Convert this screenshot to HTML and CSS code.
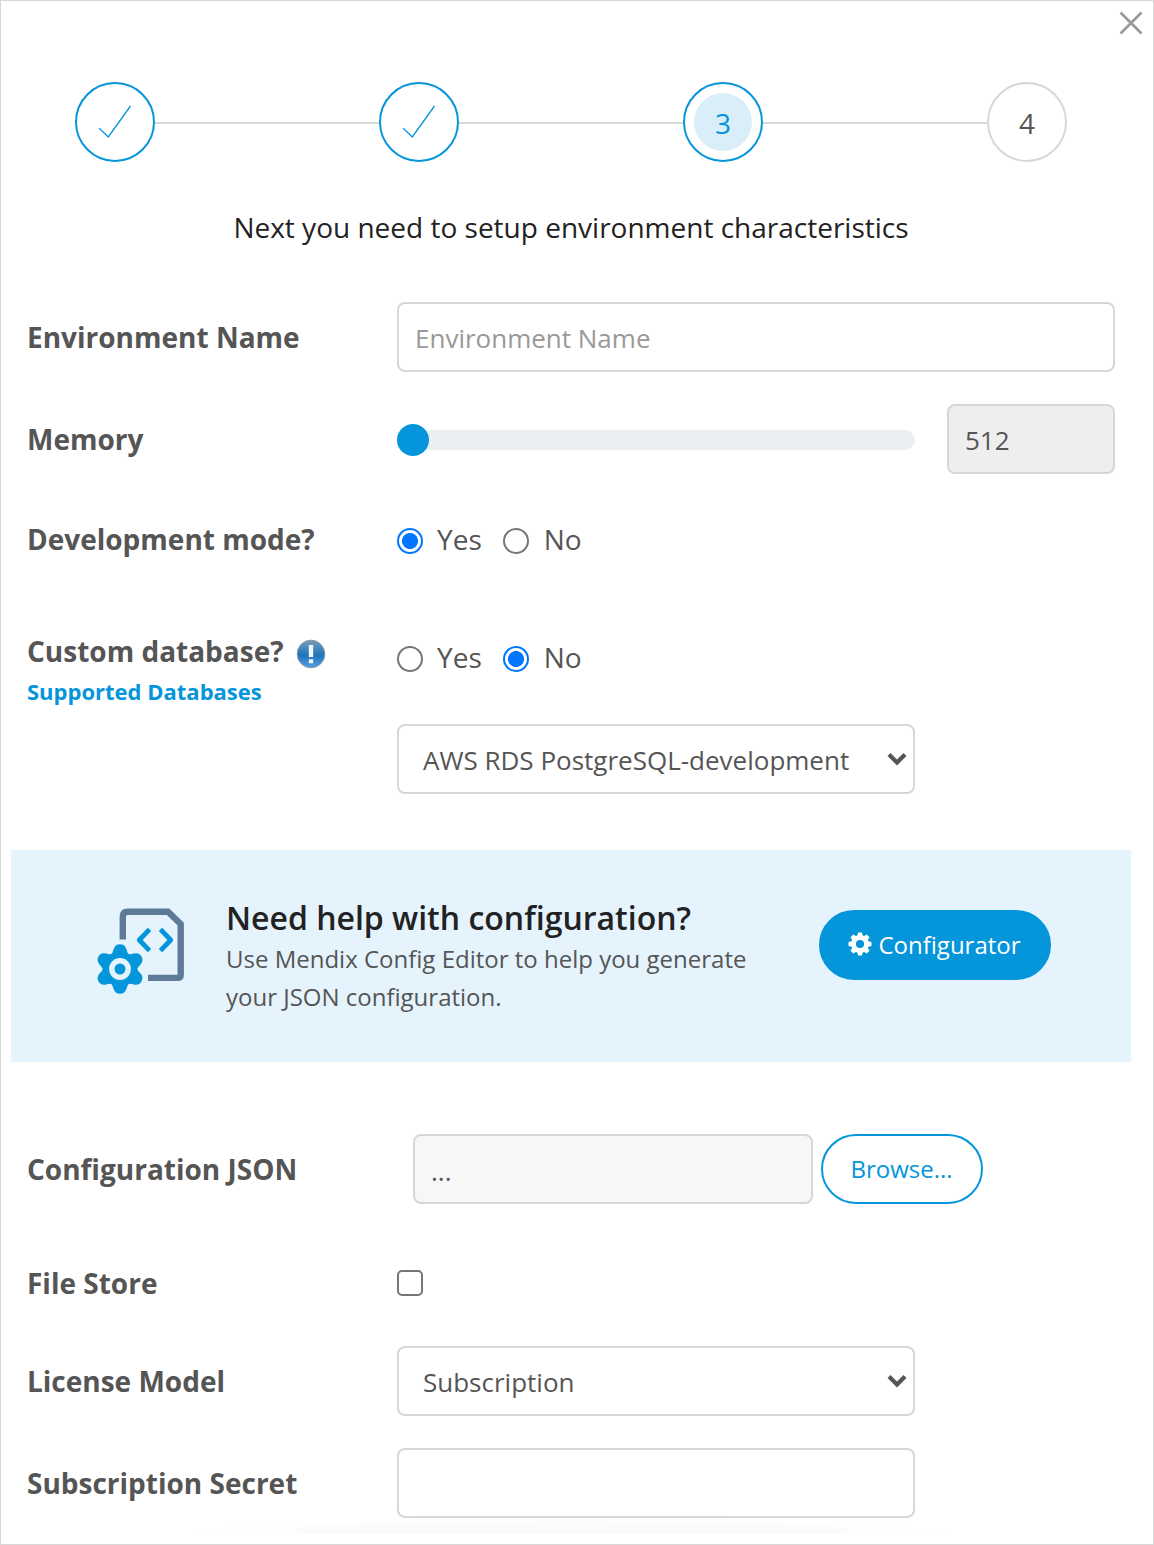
FILE: index.html
```html
<!DOCTYPE html>
<html lang="en">
<head>
<meta charset="utf-8">
<title>Create Environment</title>
<link rel="stylesheet" href="styles.css">
</head>
<body>
<main class="dialog">
  <button class="close" aria-label="Close">
    <svg width="24" height="24" viewBox="0 0 24 24"><path d="M1.5 1.5 22.5 22.5M22.5 1.5 1.5 22.5" fill="none" stroke="#999" stroke-width="2.7"/></svg>
  </button>
  <div class="steps">
    <div class="step done"><svg width="34" height="34" viewBox="0 0 34 34"><path d="M1.2 24.3 10.3 33 32.5 2" fill="none" stroke="#0595db" stroke-width="1.3"/></svg></div>
    <div class="line"></div>
    <div class="step done"><svg width="34" height="34" viewBox="0 0 34 34"><path d="M1.2 24.3 10.3 33 32.5 2" fill="none" stroke="#0595db" stroke-width="1.3"/></svg></div>
    <div class="line"></div>
    <div class="step current"><span>3</span></div>
    <div class="line"></div>
    <div class="step"><span>4</span></div>
  </div>
  <h1 class="title">Next you need to setup environment characteristics</h1>

  <div class="row">
    <label class="label">Environment Name</label>
    <input class="field wide" type="text" placeholder="Environment Name">
  </div>
  <div class="row">
    <label class="label">Memory</label>
    <div class="slider"><div class="thumb"></div></div>
    <input class="field amount" type="text" value="512" readonly>
  </div>
  <div class="row mode">
    <label class="label">Development mode?</label>
    <div class="radios">
      <i class="radio checked"></i><span>Yes</span>
      <i class="radio"></i><span>No</span>
    </div>
  </div>
  <div class="row database">
    <div class="label">
      <div class="label-line">Custom database?
        <svg class="info" width="30" height="30" viewBox="0 0 30 30">
          <defs><linearGradient id="ball" x1="0" y1="0" x2="0" y2="1"><stop offset="0" stop-color="#7f99ae"/><stop offset=".25" stop-color="#4a8bc3"/><stop offset=".55" stop-color="#2272b9"/><stop offset="1" stop-color="#55a2e6"/></linearGradient></defs>
          <circle cx="15" cy="15" r="13.800" fill="url(#ball)" stroke="#7e96aa" stroke-width="1"/>
          <path d="M12.800 6h4.400v12h-4.400zM12.800 20.200h4.400v4h-4.400z" fill="#f4f6f8"/>
        </svg>
      </div>
      <a class="link">Supported Databases</a>
    </div>
    <div class="stack">
      <div class="radios">
        <i class="radio"></i><span>Yes</span>
        <i class="radio checked"></i><span>No</span>
      </div>
      <div class="field select"><span>AWS RDS PostgreSQL-development</span>
        <svg width="20" height="14" viewBox="0 0 20 14"><path d="M2 2.5 10 10.5 18 2.5" fill="none" stroke="#555" stroke-width="4.2"/></svg>
      </div>
    </div>
  </div>

  <section class="banner">
    <svg class="banner-icon" width="90" height="90" viewBox="0 0 90 90">
      <path d="M25.800 35.500V12.700Q25.800 7.700 30.800 7.700H71L83.700 20V71Q83.700 73.900 80.700 73.900H51" fill="none" stroke="#5d7b97" stroke-width="6.400"/>
      <path d="M52.500 25.300 42.300 36 52.500 46.700M63.500 25.300 73.700 36 63.500 46.700" fill="none" stroke="#0595db" stroke-width="4.800" stroke-linejoin="round"/>
      <g transform="translate(23 65)" fill="#0595db">
        <circle r="17"/>
        <path id="tooth" d="M-9.500 -14Q-7.200 -16 -6.500 -19.500Q-5 -24.800 0 -24.800Q5 -24.800 6.500 -19.500Q7.200 -16 9.500 -14Z"/>
        <use href="#tooth" transform="rotate(60)"/><use href="#tooth" transform="rotate(120)"/>
        <use href="#tooth" transform="rotate(180)"/><use href="#tooth" transform="rotate(240)"/><use href="#tooth" transform="rotate(300)"/>
        <circle r="8.200" fill="none" stroke="#e5f3fd" stroke-width="5.400"/>
      </g>
    </svg>
    <div class="banner-copy">
      <h2>Need help with configuration?</h2>
      <p>Use Mendix Config Editor to help you generate<br>your JSON configuration.</p>
    </div>
    <button class="btn primary">
      <svg width="24" height="24" viewBox="-12 -12 24 24">
        <g fill="#fff">
          <g id="cogs"><path id="cog" d="M-3.100 -7 -1.900 -11.500H1.900L3.100 -7Z"/><use href="#cog" transform="rotate(45)"/><use href="#cog" transform="rotate(90)"/><use href="#cog" transform="rotate(135)"/></g>
          <use href="#cogs" transform="rotate(180)"/>
        </g>
        <circle r="6.500" fill="none" stroke="#fff" stroke-width="4.800"/>
      </svg>
      <span>Configurator</span>
    </button>
  </section>

  <div class="row">
    <label class="label">Configuration JSON</label>
    <div class="field file">...</div>
    <button class="btn outline">Browse...</button>
  </div>
  <div class="row store">
    <label class="label">File Store</label>
    <i class="checkbox"></i>
  </div>
  <div class="row">
    <label class="label">License Model</label>
    <div class="field select"><span>Subscription</span>
      <svg width="20" height="14" viewBox="0 0 20 14"><path d="M2 2.500 10 10.500 18 2.500" fill="none" stroke="#555" stroke-width="4.200"/></svg>
    </div>
  </div>
  <div class="row last">
    <label class="label">Subscription Secret</label>
    <input class="field" type="text">
  </div>
  <div class="scroll-shade"></div>
</main>
</body>
</html>
```
FILE: styles.css
```css
* { box-sizing: border-box; }
body {
  margin: 0;
  background: #fff;
  color: #555;
  font: 26px/38px "Open Sans", sans-serif;
}
h1, h2, p { margin: 0; }
input, button { font: inherit; color: inherit; }
svg { flex: none; display: block; }

.dialog {
  position: relative;
  width: 1154px;
  height: 1545px;
  padding-top: 81px;
  border: 1px solid #d7d7d7;
  overflow: hidden;
}
.close {
  position: absolute;
  top: 10px;
  right: 10px;
  padding: 0;
  border: 0;
  background: none;
}

.steps {
  display: flex;
  align-items: center;
  margin: 0 86px 0 74px;
}
.step {
  display: flex;
  align-items: center;
  justify-content: center;
  width: 80px;
  height: 80px;
  border: 2px solid #d7d7d7;
  border-radius: 50%;
  font-size: 28px;
}
.step span { padding-top: 2px; }
.step.done, .step.current { border-color: #0595db; }
.step.done svg { margin-bottom: 2px; }
.step.current span {
  width: 58px;
  height: 58px;
  border-radius: 50%;
  background: #daeef9;
  color: #0595db;
  line-height: 56px;
  text-align: center;
}
.line {
  flex: 1;
  height: 2px;
  margin-top: 2px;
  background: #d7d7d7;
}
.title {
  width: 1140px;
  margin: 45px 0 55px;
  color: #222;
  font-size: 28px;
  font-weight: 400;
  line-height: 40px;
  text-align: center;
}

.row {
  display: flex;
  align-items: center;
  height: 70px;
  margin: 0 38px 32px 26px;
}
.label {
  width: 370px;
  flex: none;
  font-size: 28px;
  font-weight: 700;
}
.field {
  width: 518px;
  height: 70px;
  padding: 1px 16px 0;
  border: 2px solid #d7d7d7;
  border-radius: 8px;
  background: #fff;
  outline: 0;
}
.field::placeholder { color: #999; opacity: 1; }
.wide { width: 718px; }
.amount {
  width: 168px;
  margin-left: 32px;
  background: #eee;
}
.slider {
  width: 518px;
  height: 20px;
  margin-top: 2px;
  border-radius: 10px;
  background: #eaeef1;
}
.thumb {
  width: 32px;
  height: 32px;
  margin-top: -6px;
  border-radius: 50%;
  background: #0595db;
}
.mode { height: 66px; }
.radios {
  display: flex;
  align-items: center;
  height: 38px;
  font-size: 28px;
}
.radios span { margin-left: 14px; }
.radios span:last-child { margin-left: 15px; }
.radios span + .radio { margin-left: 21px; }
.radio {
  width: 26px;
  height: 26px;
  margin-top: 3px;
  border: 2px solid #767676;
  border-radius: 50%;
}
.radio.checked {
  border-color: #0075ff;
  background: radial-gradient(circle, #0075ff 7.600px, #fff 8.400px);
}

.database {
  align-items: flex-start;
  height: 162px;
  margin-top: 60px;
  margin-bottom: 56px;
}
.label-line {
  display: flex;
  align-items: center;
  gap: 12px;
}
.info { margin-top: 5px; }
.link {
  display: block;
  color: #0595db;
  font-size: 22px;
  line-height: 42px;
}
.stack { padding-top: 6px; }
.stack .select { margin-top: 48px; }
.select {
  display: flex;
  align-items: center;
  justify-content: space-between;
  padding: 1px 6px 0 24px;
}
.select svg { margin-bottom: 2px; }

.banner {
  display: flex;
  width: 1120px;
  height: 212px;
  margin: 0 0 72px 10px;
  background: #e5f3fd;
}
.banner-icon { margin: 54px 0 0 86px; }
.banner-copy {
  width: 632px;
  padding: 46px 0 0 39px;
  font-size: 24px;
}
.banner h2 {
  margin-bottom: 1px;
  color: #222;
  font-size: 32px;
  font-weight: 600;
  line-height: 43px;
}
.btn {
  display: flex;
  align-items: center;
  justify-content: center;
  height: 70px;
  padding: 0;
  border: 2px solid #0595db;
  border-radius: 35px;
  font-size: 24px;
}
.primary {
  gap: 6px;
  width: 232px;
  margin-top: 60px;
  padding-right: 1px;
  background: #0595db;
  color: #fff;
}
.primary svg { margin-bottom: 2px; }
.outline {
  width: 162px;
  margin-left: 8px;
  padding-right: 1px;
  background: #fff;
  color: #0595db;
}
.file {
  width: 400px;
  margin-left: 16px;
  padding-top: 16px;
  background: #f7f7f7;
}
.store { margin-top: 44px; margin-bottom: 28px; }
.checkbox {
  width: 26px;
  height: 26px;
  border: 2px solid #767676;
  border-radius: 5px;
}
.last { margin-bottom: 0; }
.scroll-shade {
  width: 760px;
  height: 16px;
  margin-left: 190px;
  background: radial-gradient(ellipse at bottom, #fbfbfb 45%, #fff 72%);
}
```
